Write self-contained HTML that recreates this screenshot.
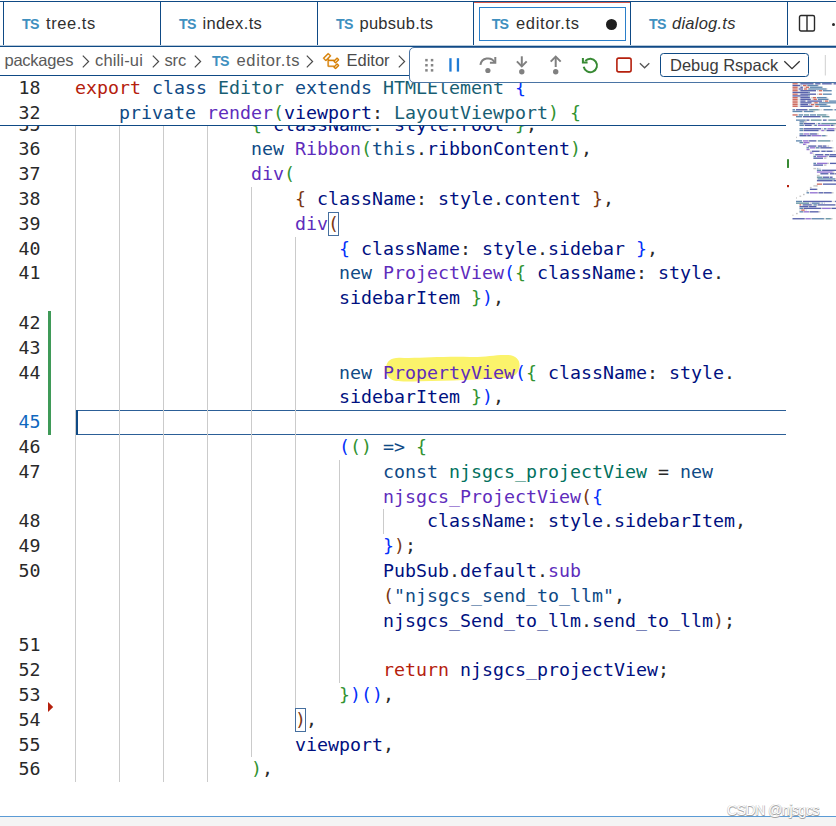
<!DOCTYPE html>
<html lang="en">
<head>
<meta charset="utf-8">
<title>editor.ts - Visual Studio Code</title>
<style>
html,body{margin:0;padding:0;background:#fff;}
body{width:836px;height:826px;position:relative;overflow:hidden;font-family:"Liberation Sans",sans-serif;color:#292929;}
.abs{position:absolute;}
/* ---------- tabs ---------- */
#tabs{position:absolute;left:0;top:0;width:836px;height:48px;background:#fff;}
#tabs .topline{position:absolute;left:0;top:1px;width:836px;height:1px;background:#0F4A85;}
#tabs .botline{position:absolute;left:0;top:45px;width:836px;height:3px;background:linear-gradient(#b7c9da 0,#b7c9da 1px,#0F4A85 1px,#0F4A85 2px,#c3d2e1 2px,#c3d2e1 3px);}
.vsep{position:absolute;top:1px;width:1px;height:45px;background:#0F4A85;}
.tab{position:absolute;top:2px;height:43px;}
.tsi{position:absolute;top:17.5px;font-size:14.2px;font-weight:bold;color:#3f90bf;letter-spacing:-0.75px;line-height:13px;}
.chev{position:absolute;}
.tlabel{position:absolute;top:12.5px;font-size:16.5px;line-height:20px;color:#303030;white-space:nowrap;}
/* ---------- breadcrumbs ---------- */
#crumbs{position:absolute;left:0;top:47px;width:836px;height:28px;background:#fff;}
#crumbs .botline{position:absolute;left:0;top:28px;width:836px;height:1px;background:#0F4A85;}
.bc{position:absolute;top:3px;font-size:16.5px;line-height:20px;color:#5a5a5a;white-space:nowrap;}
/* ---------- debug toolbar ---------- */
#dbg{position:absolute;left:409px;top:47px;width:440px;height:36px;background:#fff;border:1px solid #4a74a4;border-radius:5px 0 0 5px;box-sizing:border-box;}
#dbgsel{position:absolute;left:250px;top:5px;width:149px;height:24px;box-sizing:border-box;border:1px solid #0F4A85;border-radius:3.5px;background:#fff;}
#dbgsel span{position:absolute;left:9px;top:1px;font-size:16.5px;line-height:20px;color:#3b3b3b;white-space:nowrap;}
/* ---------- editor ---------- */
#editor{position:absolute;left:0;top:76px;width:836px;height:741px;background:#fff;overflow:hidden;}
#lines{position:absolute;left:0;top:-76px;width:836px;height:826px;}
.ln,.cl,.sl{font-family:"DejaVu Sans Mono","Liberation Mono",monospace;font-size:18.27px;line-height:24.8px;height:24.8px;white-space:pre;}
.ln{position:absolute;left:0;width:40.6px;text-align:right;color:#292929;}
.ln.cur{color:#1068bf;}
.cl{position:absolute;color:#292929;}
.ig{position:absolute;width:1px;background:#cbcbcb;}
.k{color:#B5200D}.s{color:#0F4A85}.t{color:#185E73}.t2{color:#02715D}.f,.fh{color:#5E2CBC}.v{color:#001080}.p{color:#292929}
.b1{color:#0431FA}.b2{color:#319331}.b3,.b3m{color:#7B3814}
.b3m{display:inline-block;height:24.8px;box-sizing:border-box;box-shadow:inset 0 0 0 1px #456f9f;vertical-align:top;}
.iga{background:#cbcbcb;}
.fh{position:relative;}
/* sticky */
#sticky{position:absolute;left:0;top:76px;width:786px;height:49px;background:#fff;border-bottom:1px solid #0F4A85;}
/* minimap */
#minimap{position:absolute;left:787px;top:76px;width:49px;height:741px;background:#fff;}
/* bottom */
#bottom{position:absolute;left:0;top:816px;width:836px;height:10px;background:#f4f4f4;border-top:1px solid #5b9bd5;box-sizing:border-box;}
#wm{position:absolute;left:727px;top:801.5px;font-size:14px;line-height:16px;color:#fff;text-shadow:0.5px 0.5px 0.3px #a2a2a2,-0.5px -0.5px 0.3px #cdcdcd,0.5px -0.5px 0.3px #c6c6c6,-0.5px 0.5px 0.3px #c6c6c6;white-space:nowrap;letter-spacing:-0.45px;z-index:5;}
</style>
</head>
<body>

<div id="editor">
<div id="lines">
<svg class="abs" style="left:380px;top:350px" width="146" height="36" viewBox="380 350 146 36"><path fill="#fbf36b" d="M386 369 C386 361 391 357.5 400 357.8 C420 358.6 440 356.2 470 357 C485 357.4 495 354.6 507 355 C516 355.2 520 360 519.6 366 C519 373 514 377.6 506 378 C480 379.2 450 381.2 420 381.2 C410 381.6 400 381.6 396 381 C390 380 386 376 386 369 Z"/></svg>
<div class="abs" style="left:48px;top:310.9px;width:3px;height:124.0px;background:#3f9a58"></div>
<div class="abs" style="left:75px;top:410.1px;width:711px;height:24.8px;box-sizing:border-box;border-top:1px solid #2c5f97;border-bottom:1px solid #2c5f97"></div>
<div class="abs" style="left:75px;top:410.1px;width:2.5px;height:24.8px;background:#0F4A85"></div>
<svg class="abs" style="left:46px;top:700px" width="10" height="14" viewBox="46 700 10 14"><polygon points="48,702 53.2,707 48,712" fill="#B5200D"/></svg>
<div class="ig " style="left:75.0px;top:112.5px;height:669.6px"></div>
<div class="ig " style="left:119.0px;top:112.5px;height:669.6px"></div>
<div class="ig " style="left:163.0px;top:112.5px;height:669.6px"></div>
<div class="ig " style="left:207.0px;top:112.5px;height:669.6px"></div>
<div class="ig " style="left:251.0px;top:186.9px;height:570.4px"></div>
<div class="ig iga" style="left:295.0px;top:236.5px;height:471.2px"></div>
<div class="ig " style="left:339.0px;top:459.7px;height:223.2px"></div>
<div class="ig " style="left:383.0px;top:509.3px;height:24.8px"></div>
<div class="ln" style="top:112.5px">35</div>
<div class="cl" style="top:112.5px;left:251.0px"><span class="b2">{</span><span class="p"> </span><span class="v">className</span><span class="p">: </span><span class="v">style</span><span class="p">.</span><span class="v">root</span><span class="p"> </span><span class="b2">}</span><span class="p">,</span></div>
<div class="ln" style="top:137.3px">36</div>
<div class="cl" style="top:137.3px;left:251.0px"><span class="s">new</span><span class="p"> </span><span class="f">Ribbon</span><span class="b2">(</span><span class="s">this</span><span class="p">.</span><span class="v">ribbonContent</span><span class="b2">)</span><span class="p">,</span></div>
<div class="ln" style="top:162.1px">37</div>
<div class="cl" style="top:162.1px;left:251.0px"><span class="f">div</span><span class="b2">(</span></div>
<div class="ln" style="top:186.9px">38</div>
<div class="cl" style="top:186.9px;left:295.0px"><span class="b3">{</span><span class="p"> </span><span class="v">className</span><span class="p">: </span><span class="v">style</span><span class="p">.</span><span class="v">content</span><span class="p"> </span><span class="b3">}</span><span class="p">,</span></div>
<div class="ln" style="top:211.7px">39</div>
<div class="cl" style="top:211.7px;left:295.0px"><span class="f">div</span><span class="b3m">(</span></div>
<div class="ln" style="top:236.5px">40</div>
<div class="cl" style="top:236.5px;left:339.0px"><span class="b1">{</span><span class="p"> </span><span class="v">className</span><span class="p">: </span><span class="v">style</span><span class="p">.</span><span class="v">sidebar</span><span class="p"> </span><span class="b1">}</span><span class="p">,</span></div>
<div class="ln" style="top:261.3px">41</div>
<div class="cl" style="top:261.3px;left:339.0px"><span class="s">new</span><span class="p"> </span><span class="f">ProjectView</span><span class="b1">(</span><span class="b2">{</span><span class="p"> </span><span class="v">className</span><span class="p">: </span><span class="v">style</span><span class="p">.</span></div>
<div class="cl" style="top:286.1px;left:339.0px"><span class="v">sidebarItem</span><span class="p"> </span><span class="b2">}</span><span class="b1">)</span><span class="p">,</span></div>
<div class="ln" style="top:310.9px">42</div>
<div class="ln" style="top:335.7px">43</div>
<div class="ln" style="top:360.5px">44</div>
<div class="cl" style="top:360.5px;left:339.0px"><span class="s">new</span><span class="p"> </span><span class="fh">PropertyView</span><span class="b1">(</span><span class="b2">{</span><span class="p"> </span><span class="v">className</span><span class="p">: </span><span class="v">style</span><span class="p">.</span></div>
<div class="cl" style="top:385.3px;left:339.0px"><span class="v">sidebarItem</span><span class="p"> </span><span class="b2">}</span><span class="b1">)</span><span class="p">,</span></div>
<div class="ln cur" style="top:410.1px">45</div>
<div class="ln" style="top:434.9px">46</div>
<div class="cl" style="top:434.9px;left:339.0px"><span class="b1">(</span><span class="b2">()</span><span class="p"> </span><span class="s">=&gt;</span><span class="p"> </span><span class="b2">{</span></div>
<div class="ln" style="top:459.7px">47</div>
<div class="cl" style="top:459.7px;left:383.0px"><span class="s">const</span><span class="p"> </span><span class="t2">njsgcs_projectView</span><span class="p"> = </span><span class="s">new</span></div>
<div class="cl" style="top:484.5px;left:383.0px"><span class="f">njsgcs_ProjectView</span><span class="b3">(</span><span class="b1">{</span></div>
<div class="ln" style="top:509.3px">48</div>
<div class="cl" style="top:509.3px;left:427.0px"><span class="v">className</span><span class="p">: </span><span class="v">style</span><span class="p">.</span><span class="v">sidebarItem</span><span class="p">,</span></div>
<div class="ln" style="top:534.1px">49</div>
<div class="cl" style="top:534.1px;left:383.0px"><span class="b1">}</span><span class="b3">)</span><span class="p">;</span></div>
<div class="ln" style="top:558.9px">50</div>
<div class="cl" style="top:558.9px;left:383.0px"><span class="v">PubSub</span><span class="p">.</span><span class="v">default</span><span class="p">.</span><span class="f">sub</span></div>
<div class="cl" style="top:583.7px;left:383.0px"><span class="b3">(</span><span class="s">&quot;njsgcs_send_to_llm&quot;</span><span class="p">,</span></div>
<div class="cl" style="top:608.5px;left:383.0px"><span class="v">njsgcs_Send_to_llm</span><span class="p">.</span><span class="v">send_to_llm</span><span class="b3">)</span><span class="p">;</span></div>
<div class="ln" style="top:633.3px">51</div>
<div class="ln" style="top:658.1px">52</div>
<div class="cl" style="top:658.1px;left:383.0px"><span class="k">return</span><span class="p"> </span><span class="v">njsgcs_projectView</span><span class="p">;</span></div>
<div class="ln" style="top:682.9px">53</div>
<div class="cl" style="top:682.9px;left:339.0px"><span class="b2">}</span><span class="b1">)</span><span class="b1">()</span><span class="p">,</span></div>
<div class="ln" style="top:707.7px">54</div>
<div class="cl" style="top:707.7px;left:295.0px"><span class="b3m">)</span><span class="p">,</span></div>
<div class="ln" style="top:732.5px">55</div>
<div class="cl" style="top:732.5px;left:295.0px"><span class="v">viewport</span><span class="p">,</span></div>
<div class="ln" style="top:757.3px">56</div>
<div class="cl" style="top:757.3px;left:251.0px"><span class="b2">)</span><span class="p">,</span></div>
</div>
</div>

<div id="sticky">
<div class="ln" style="top:0.2px">18</div>
<div class="cl" style="top:0.2px;left:75px"><span class="k">export</span> <span class="s">class</span> <span class="t">Editor</span> <span class="s">extends</span> <span class="t">HTMLElement</span> <span class="b1">{</span></div>
<div class="ln" style="top:25px">32</div>
<div class="cl" style="top:25px;left:119px"><span class="s">private</span> <span class="f">render</span><span class="b2">(</span><span class="v">viewport</span><span class="p">:</span> <span class="t">LayoutViewport</span><span class="b2">)</span> <span class="b2">{</span></div>
</div>
<div id="minimap"></div>
<svg id="mm" style="position:absolute;left:786px;top:76px" width="50" height="160" viewBox="786 76 50 160">
<rect x="792.5" y="83.13" width="5.2" height="1.35" fill="#B5200D" opacity="0.66"/>
<rect x="798.6" y="83.13" width="0.9" height="1.35" fill="#555" opacity="0.35"/>
<rect x="800.3" y="83.13" width="13.1" height="1.35" fill="#001080" opacity="0.66"/>
<rect x="813.4" y="83.13" width="0.9" height="1.35" fill="#666" opacity="0.35"/>
<rect x="815.2" y="83.13" width="5.2" height="1.35" fill="#001080" opacity="0.66"/>
<rect x="820.4" y="83.13" width="0.9" height="1.35" fill="#666" opacity="0.35"/>
<rect x="822.1" y="83.13" width="9.6" height="1.35" fill="#001080" opacity="0.66"/>
<rect x="831.7" y="83.13" width="0.9" height="1.35" fill="#666" opacity="0.35"/>
<rect x="833.5" y="83.13" width="2.5" height="1.35" fill="#001080" opacity="0.66"/>
<rect x="792.5" y="84.86" width="7.8" height="1.35" fill="#001080" opacity="0.66"/>
<rect x="801.2" y="84.86" width="0.9" height="1.35" fill="#555" opacity="0.35"/>
<rect x="803.0" y="84.86" width="3.5" height="1.35" fill="#B5200D" opacity="0.66"/>
<rect x="807.3" y="84.86" width="10.5" height="1.35" fill="#0F4A85" opacity="0.66"/>
<rect x="817.8" y="84.86" width="0.9" height="1.35" fill="#666" opacity="0.35"/>
<rect x="792.5" y="86.59" width="5.2" height="1.35" fill="#B5200D" opacity="0.66"/>
<rect x="798.6" y="86.59" width="0.9" height="1.35" fill="#555" opacity="0.35"/>
<rect x="800.3" y="86.59" width="2.6" height="1.35" fill="#001080" opacity="0.66"/>
<rect x="803.8" y="86.59" width="0.9" height="1.35" fill="#555" opacity="0.35"/>
<rect x="805.6" y="86.59" width="3.5" height="1.35" fill="#B5200D" opacity="0.66"/>
<rect x="809.9" y="86.59" width="12.2" height="1.35" fill="#0F4A85" opacity="0.66"/>
<rect x="822.1" y="86.59" width="0.9" height="1.35" fill="#666" opacity="0.35"/>
<rect x="792.5" y="88.32" width="5.2" height="1.35" fill="#B5200D" opacity="0.66"/>
<rect x="798.6" y="88.32" width="4.4" height="1.35" fill="#001080" opacity="0.66"/>
<rect x="803.8" y="88.32" width="3.5" height="1.35" fill="#B5200D" opacity="0.66"/>
<rect x="808.2" y="88.32" width="18.3" height="1.35" fill="#0F4A85" opacity="0.66"/>
<rect x="826.5" y="88.32" width="0.9" height="1.35" fill="#666" opacity="0.35"/>
<rect x="792.5" y="90.05" width="5.2" height="1.35" fill="#B5200D" opacity="0.66"/>
<rect x="798.6" y="90.05" width="0.9" height="1.35" fill="#555" opacity="0.35"/>
<rect x="800.3" y="90.05" width="15.7" height="1.35" fill="#001080" opacity="0.66"/>
<rect x="816.9" y="90.05" width="0.9" height="1.35" fill="#555" opacity="0.35"/>
<rect x="818.7" y="90.05" width="3.5" height="1.35" fill="#B5200D" opacity="0.66"/>
<rect x="823.0" y="90.05" width="8.7" height="1.35" fill="#0F4A85" opacity="0.66"/>
<rect x="792.5" y="91.78" width="15.7" height="1.35" fill="#001080" opacity="0.66"/>
<rect x="808.2" y="91.78" width="1.7" height="1.35" fill="#0F4A85" opacity="0.66"/>
<rect x="792.5" y="93.51" width="5.2" height="1.35" fill="#B5200D" opacity="0.66"/>
<rect x="798.6" y="93.51" width="0.9" height="1.35" fill="#555" opacity="0.35"/>
<rect x="800.3" y="93.51" width="15.7" height="1.35" fill="#001080" opacity="0.66"/>
<rect x="816.9" y="93.51" width="0.9" height="1.35" fill="#555" opacity="0.35"/>
<rect x="818.7" y="93.51" width="3.5" height="1.35" fill="#B5200D" opacity="0.66"/>
<rect x="823.0" y="93.51" width="8.7" height="1.35" fill="#0F4A85" opacity="0.66"/>
<rect x="792.5" y="95.24" width="15.7" height="1.35" fill="#001080" opacity="0.66"/>
<rect x="808.2" y="95.24" width="1.7" height="1.35" fill="#0F4A85" opacity="0.66"/>
<rect x="792.5" y="96.97" width="5.2" height="1.35" fill="#B5200D" opacity="0.66"/>
<rect x="798.6" y="96.97" width="0.9" height="1.35" fill="#555" opacity="0.35"/>
<rect x="800.3" y="96.97" width="9.6" height="1.35" fill="#001080" opacity="0.66"/>
<rect x="810.8" y="96.97" width="0.9" height="1.35" fill="#555" opacity="0.35"/>
<rect x="812.6" y="96.97" width="3.5" height="1.35" fill="#B5200D" opacity="0.66"/>
<rect x="816.9" y="96.97" width="9.6" height="1.35" fill="#0F4A85" opacity="0.66"/>
<rect x="826.5" y="96.97" width="0.9" height="1.35" fill="#666" opacity="0.35"/>
<rect x="792.5" y="98.70" width="5.2" height="1.35" fill="#B5200D" opacity="0.66"/>
<rect x="798.6" y="98.70" width="0.9" height="1.35" fill="#555" opacity="0.35"/>
<rect x="800.3" y="98.70" width="10.5" height="1.35" fill="#001080" opacity="0.66"/>
<rect x="811.7" y="98.70" width="0.9" height="1.35" fill="#555" opacity="0.35"/>
<rect x="813.4" y="98.70" width="3.5" height="1.35" fill="#B5200D" opacity="0.66"/>
<rect x="817.8" y="98.70" width="10.5" height="1.35" fill="#0F4A85" opacity="0.66"/>
<rect x="828.3" y="98.70" width="0.9" height="1.35" fill="#666" opacity="0.35"/>
<rect x="792.5" y="100.43" width="5.2" height="1.35" fill="#B5200D" opacity="0.66"/>
<rect x="798.6" y="100.43" width="0.9" height="1.35" fill="#555" opacity="0.35"/>
<rect x="800.3" y="100.43" width="5.2" height="1.35" fill="#001080" opacity="0.66"/>
<rect x="805.6" y="100.43" width="0.9" height="1.35" fill="#666" opacity="0.35"/>
<rect x="807.3" y="100.43" width="14.8" height="1.35" fill="#001080" opacity="0.66"/>
<rect x="823.0" y="100.43" width="0.9" height="1.35" fill="#555" opacity="0.35"/>
<rect x="824.8" y="100.43" width="3.5" height="1.35" fill="#B5200D" opacity="0.66"/>
<rect x="829.1" y="100.43" width="6.9" height="1.35" fill="#0F4A85" opacity="0.66"/>
<rect x="792.5" y="102.16" width="5.2" height="1.35" fill="#B5200D" opacity="0.66"/>
<rect x="798.6" y="102.16" width="0.9" height="1.35" fill="#555" opacity="0.35"/>
<rect x="800.3" y="102.16" width="11.3" height="1.35" fill="#001080" opacity="0.66"/>
<rect x="812.6" y="102.16" width="0.9" height="1.35" fill="#555" opacity="0.35"/>
<rect x="814.3" y="102.16" width="3.5" height="1.35" fill="#B5200D" opacity="0.66"/>
<rect x="818.7" y="102.16" width="17.3" height="1.35" fill="#0F4A85" opacity="0.66"/>
<rect x="792.5" y="103.89" width="5.2" height="1.35" fill="#B5200D" opacity="0.66"/>
<rect x="798.6" y="103.89" width="0.9" height="1.35" fill="#555" opacity="0.35"/>
<rect x="800.3" y="103.89" width="7.8" height="1.35" fill="#001080" opacity="0.66"/>
<rect x="809.1" y="103.89" width="0.9" height="1.35" fill="#555" opacity="0.35"/>
<rect x="810.8" y="103.89" width="3.5" height="1.35" fill="#B5200D" opacity="0.66"/>
<rect x="815.2" y="103.89" width="11.3" height="1.35" fill="#0F4A85" opacity="0.66"/>
<rect x="826.5" y="103.89" width="0.9" height="1.35" fill="#666" opacity="0.35"/>
<rect x="792.5" y="105.62" width="5.2" height="1.35" fill="#B5200D" opacity="0.66"/>
<rect x="798.6" y="105.62" width="0.9" height="1.35" fill="#555" opacity="0.35"/>
<rect x="800.3" y="105.62" width="12.2" height="1.35" fill="#001080" opacity="0.66"/>
<rect x="813.4" y="105.62" width="0.9" height="1.35" fill="#555" opacity="0.35"/>
<rect x="815.2" y="105.62" width="3.5" height="1.35" fill="#B5200D" opacity="0.66"/>
<rect x="819.5" y="105.62" width="10.5" height="1.35" fill="#0F4A85" opacity="0.66"/>
<rect x="830.0" y="105.62" width="0.9" height="1.35" fill="#666" opacity="0.35"/>
<rect x="792.5" y="109.08" width="2.6" height="1.35" fill="#0F4A85" opacity="0.66"/>
<rect x="796.0" y="109.08" width="11.3" height="1.35" fill="#001080" opacity="0.66"/>
<rect x="807.3" y="109.08" width="0.9" height="1.35" fill="#666" opacity="0.35"/>
<rect x="809.1" y="109.08" width="9.6" height="1.35" fill="#185E73" opacity="0.66"/>
<rect x="818.7" y="109.08" width="0.9" height="1.35" fill="#555" opacity="0.35"/>
<rect x="819.5" y="109.08" width="0.9" height="1.35" fill="#555" opacity="0.35"/>
<rect x="821.3" y="109.08" width="0.9" height="1.35" fill="#666" opacity="0.35"/>
<rect x="823.0" y="109.08" width="0.9" height="1.35" fill="#555" opacity="0.35"/>
<rect x="823.9" y="109.08" width="8.7" height="1.35" fill="#0F4A85" opacity="0.66"/>
<rect x="832.6" y="109.08" width="0.9" height="1.35" fill="#666" opacity="0.35"/>
<rect x="834.4" y="109.08" width="1.6" height="1.35" fill="#0F4A85" opacity="0.66"/>
<rect x="792.5" y="110.81" width="9.6" height="1.35" fill="#0F4A85" opacity="0.66"/>
<rect x="802.1" y="110.81" width="0.9" height="1.35" fill="#666" opacity="0.35"/>
<rect x="803.8" y="110.81" width="9.6" height="1.35" fill="#0F4A85" opacity="0.66"/>
<rect x="813.4" y="110.81" width="0.9" height="1.35" fill="#555" opacity="0.35"/>
<rect x="814.3" y="110.81" width="0.9" height="1.35" fill="#666" opacity="0.35"/>
<rect x="792.5" y="114.27" width="5.2" height="1.35" fill="#B5200D" opacity="0.66"/>
<rect x="798.6" y="114.27" width="4.4" height="1.35" fill="#0F4A85" opacity="0.66"/>
<rect x="803.8" y="114.27" width="5.2" height="1.35" fill="#185E73" opacity="0.66"/>
<rect x="809.9" y="114.27" width="6.1" height="1.35" fill="#0F4A85" opacity="0.66"/>
<rect x="816.9" y="114.27" width="9.6" height="1.35" fill="#185E73" opacity="0.66"/>
<rect x="827.4" y="114.27" width="0.9" height="1.35" fill="#555" opacity="0.35"/>
<rect x="796.0" y="116.00" width="6.1" height="1.35" fill="#0F4A85" opacity="0.66"/>
<rect x="803.0" y="116.00" width="17.4" height="1.35" fill="#001080" opacity="0.66"/>
<rect x="820.4" y="116.00" width="0.9" height="1.35" fill="#666" opacity="0.35"/>
<rect x="822.1" y="116.00" width="7.0" height="1.35" fill="#185E73" opacity="0.66"/>
<rect x="829.1" y="116.00" width="0.9" height="1.35" fill="#666" opacity="0.35"/>
<rect x="796.0" y="119.46" width="9.6" height="1.35" fill="#0F4A85" opacity="0.66"/>
<rect x="805.6" y="119.46" width="0.9" height="1.35" fill="#555" opacity="0.35"/>
<rect x="806.5" y="119.46" width="2.6" height="1.35" fill="#001080" opacity="0.66"/>
<rect x="809.1" y="119.46" width="0.9" height="1.35" fill="#666" opacity="0.35"/>
<rect x="810.8" y="119.46" width="10.5" height="1.35" fill="#185E73" opacity="0.66"/>
<rect x="821.3" y="119.46" width="0.9" height="1.35" fill="#666" opacity="0.35"/>
<rect x="823.0" y="119.46" width="3.5" height="1.35" fill="#001080" opacity="0.66"/>
<rect x="826.5" y="119.46" width="0.9" height="1.35" fill="#666" opacity="0.35"/>
<rect x="828.3" y="119.46" width="7.7" height="1.35" fill="#185E73" opacity="0.66"/>
<rect x="799.5" y="121.19" width="4.4" height="1.35" fill="#0F4A85" opacity="0.66"/>
<rect x="803.8" y="121.19" width="0.9" height="1.35" fill="#555" opacity="0.35"/>
<rect x="804.7" y="121.19" width="0.9" height="1.35" fill="#555" opacity="0.35"/>
<rect x="805.6" y="121.19" width="0.9" height="1.35" fill="#666" opacity="0.35"/>
<rect x="799.5" y="122.92" width="3.5" height="1.35" fill="#0F4A85" opacity="0.66"/>
<rect x="803.0" y="122.92" width="0.9" height="1.35" fill="#666" opacity="0.35"/>
<rect x="803.8" y="122.92" width="11.3" height="1.35" fill="#001080" opacity="0.66"/>
<rect x="816.0" y="122.92" width="0.9" height="1.35" fill="#666" opacity="0.35"/>
<rect x="817.8" y="122.92" width="2.6" height="1.35" fill="#0F4A85" opacity="0.66"/>
<rect x="821.3" y="122.92" width="14.7" height="1.35" fill="#185E73" opacity="0.66"/>
<rect x="799.5" y="124.65" width="4.4" height="1.35" fill="#0F4A85" opacity="0.66"/>
<rect x="804.7" y="124.65" width="7.0" height="1.35" fill="#001080" opacity="0.66"/>
<rect x="812.6" y="124.65" width="0.9" height="1.35" fill="#666" opacity="0.35"/>
<rect x="814.3" y="124.65" width="2.6" height="1.35" fill="#0F4A85" opacity="0.66"/>
<rect x="817.8" y="124.65" width="12.2" height="1.35" fill="#5E2CBC" opacity="0.66"/>
<rect x="830.0" y="124.65" width="0.9" height="1.35" fill="#555" opacity="0.35"/>
<rect x="830.9" y="124.65" width="2.6" height="1.35" fill="#001080" opacity="0.66"/>
<rect x="833.5" y="124.65" width="0.9" height="1.35" fill="#555" opacity="0.35"/>
<rect x="834.4" y="124.65" width="0.9" height="1.35" fill="#666" opacity="0.35"/>
<rect x="799.5" y="128.11" width="3.5" height="1.35" fill="#0F4A85" opacity="0.66"/>
<rect x="803.0" y="128.11" width="0.9" height="1.35" fill="#666" opacity="0.35"/>
<rect x="803.8" y="128.11" width="17.4" height="1.35" fill="#001080" opacity="0.66"/>
<rect x="822.1" y="128.11" width="0.9" height="1.35" fill="#666" opacity="0.35"/>
<rect x="823.9" y="128.11" width="2.6" height="1.35" fill="#0F4A85" opacity="0.66"/>
<rect x="827.4" y="128.11" width="7.0" height="1.35" fill="#5E2CBC" opacity="0.66"/>
<rect x="834.4" y="128.11" width="0.9" height="1.35" fill="#555" opacity="0.35"/>
<rect x="835.2" y="128.11" width="0.8" height="1.35" fill="#555" opacity="0.35"/>
<rect x="799.5" y="129.84" width="3.5" height="1.35" fill="#0F4A85" opacity="0.66"/>
<rect x="803.0" y="129.84" width="0.9" height="1.35" fill="#666" opacity="0.35"/>
<rect x="803.8" y="129.84" width="14.8" height="1.35" fill="#001080" opacity="0.66"/>
<rect x="819.5" y="129.84" width="0.9" height="1.35" fill="#666" opacity="0.35"/>
<rect x="821.3" y="129.84" width="2.6" height="1.35" fill="#5E2CBC" opacity="0.66"/>
<rect x="823.9" y="129.84" width="0.9" height="1.35" fill="#555" opacity="0.35"/>
<rect x="824.8" y="129.84" width="0.9" height="1.35" fill="#555" opacity="0.35"/>
<rect x="826.5" y="129.84" width="7.8" height="1.35" fill="#001080" opacity="0.66"/>
<rect x="834.4" y="129.84" width="0.9" height="1.35" fill="#666" opacity="0.35"/>
<rect x="799.5" y="133.30" width="3.5" height="1.35" fill="#0F4A85" opacity="0.66"/>
<rect x="803.0" y="133.30" width="0.9" height="1.35" fill="#666" opacity="0.35"/>
<rect x="803.8" y="133.30" width="5.2" height="1.35" fill="#5E2CBC" opacity="0.66"/>
<rect x="809.1" y="133.30" width="0.9" height="1.35" fill="#555" opacity="0.35"/>
<rect x="809.9" y="133.30" width="7.0" height="1.35" fill="#001080" opacity="0.66"/>
<rect x="816.9" y="133.30" width="0.9" height="1.35" fill="#555" opacity="0.35"/>
<rect x="817.8" y="133.30" width="0.9" height="1.35" fill="#666" opacity="0.35"/>
<rect x="799.5" y="135.03" width="7.0" height="1.35" fill="#001080" opacity="0.66"/>
<rect x="806.5" y="135.03" width="0.9" height="1.35" fill="#666" opacity="0.35"/>
<rect x="807.3" y="135.03" width="3.5" height="1.35" fill="#001080" opacity="0.66"/>
<rect x="810.8" y="135.03" width="0.9" height="1.35" fill="#666" opacity="0.35"/>
<rect x="811.7" y="135.03" width="9.6" height="1.35" fill="#5E2CBC" opacity="0.66"/>
<rect x="821.3" y="135.03" width="0.9" height="1.35" fill="#555" opacity="0.35"/>
<rect x="822.1" y="135.03" width="3.5" height="1.35" fill="#0F4A85" opacity="0.66"/>
<rect x="825.6" y="135.03" width="0.9" height="1.35" fill="#555" opacity="0.35"/>
<rect x="826.5" y="135.03" width="0.9" height="1.35" fill="#666" opacity="0.35"/>
<rect x="796.0" y="136.76" width="0.9" height="1.35" fill="#555" opacity="0.35"/>
<rect x="796.0" y="140.22" width="6.1" height="1.35" fill="#0F4A85" opacity="0.66"/>
<rect x="803.0" y="140.22" width="5.2" height="1.35" fill="#5E2CBC" opacity="0.66"/>
<rect x="808.2" y="140.22" width="0.9" height="1.35" fill="#555" opacity="0.35"/>
<rect x="809.1" y="140.22" width="7.0" height="1.35" fill="#001080" opacity="0.66"/>
<rect x="816.0" y="140.22" width="0.9" height="1.35" fill="#666" opacity="0.35"/>
<rect x="817.8" y="140.22" width="12.2" height="1.35" fill="#185E73" opacity="0.66"/>
<rect x="830.0" y="140.22" width="0.9" height="1.35" fill="#555" opacity="0.35"/>
<rect x="831.7" y="140.22" width="0.9" height="1.35" fill="#555" opacity="0.35"/>
<rect x="799.5" y="141.95" width="3.5" height="1.35" fill="#0F4A85" opacity="0.66"/>
<rect x="803.0" y="141.95" width="0.9" height="1.35" fill="#666" opacity="0.35"/>
<rect x="803.8" y="141.95" width="5.2" height="1.35" fill="#5E2CBC" opacity="0.66"/>
<rect x="809.1" y="141.95" width="0.9" height="1.35" fill="#555" opacity="0.35"/>
<rect x="803.0" y="143.68" width="2.6" height="1.35" fill="#5E2CBC" opacity="0.66"/>
<rect x="805.6" y="143.68" width="0.9" height="1.35" fill="#555" opacity="0.35"/>
<rect x="806.5" y="145.41" width="0.9" height="1.35" fill="#555" opacity="0.35"/>
<rect x="808.2" y="145.41" width="7.8" height="1.35" fill="#001080" opacity="0.66"/>
<rect x="816.0" y="145.41" width="0.9" height="1.35" fill="#666" opacity="0.35"/>
<rect x="817.8" y="145.41" width="4.4" height="1.35" fill="#001080" opacity="0.66"/>
<rect x="822.1" y="145.41" width="0.9" height="1.35" fill="#666" opacity="0.35"/>
<rect x="823.0" y="145.41" width="3.5" height="1.35" fill="#001080" opacity="0.66"/>
<rect x="827.4" y="145.41" width="0.9" height="1.35" fill="#555" opacity="0.35"/>
<rect x="828.3" y="145.41" width="0.9" height="1.35" fill="#666" opacity="0.35"/>
<rect x="806.5" y="147.14" width="2.6" height="1.35" fill="#0F4A85" opacity="0.66"/>
<rect x="809.9" y="147.14" width="5.2" height="1.35" fill="#5E2CBC" opacity="0.66"/>
<rect x="815.2" y="147.14" width="0.9" height="1.35" fill="#555" opacity="0.35"/>
<rect x="816.0" y="147.14" width="3.5" height="1.35" fill="#0F4A85" opacity="0.66"/>
<rect x="819.5" y="147.14" width="0.9" height="1.35" fill="#666" opacity="0.35"/>
<rect x="820.4" y="147.14" width="11.3" height="1.35" fill="#001080" opacity="0.66"/>
<rect x="831.7" y="147.14" width="0.9" height="1.35" fill="#555" opacity="0.35"/>
<rect x="832.6" y="147.14" width="0.9" height="1.35" fill="#666" opacity="0.35"/>
<rect x="806.5" y="148.87" width="2.6" height="1.35" fill="#5E2CBC" opacity="0.66"/>
<rect x="809.1" y="148.87" width="0.9" height="1.35" fill="#555" opacity="0.35"/>
<rect x="809.9" y="150.60" width="0.9" height="1.35" fill="#555" opacity="0.35"/>
<rect x="811.7" y="150.60" width="7.8" height="1.35" fill="#001080" opacity="0.66"/>
<rect x="819.5" y="150.60" width="0.9" height="1.35" fill="#666" opacity="0.35"/>
<rect x="821.3" y="150.60" width="4.4" height="1.35" fill="#001080" opacity="0.66"/>
<rect x="825.6" y="150.60" width="0.9" height="1.35" fill="#666" opacity="0.35"/>
<rect x="826.5" y="150.60" width="6.1" height="1.35" fill="#001080" opacity="0.66"/>
<rect x="833.5" y="150.60" width="0.9" height="1.35" fill="#555" opacity="0.35"/>
<rect x="834.4" y="150.60" width="0.9" height="1.35" fill="#666" opacity="0.35"/>
<rect x="809.9" y="152.33" width="2.6" height="1.35" fill="#5E2CBC" opacity="0.66"/>
<rect x="812.6" y="152.33" width="0.9" height="1.35" fill="#555" opacity="0.35"/>
<rect x="813.4" y="154.06" width="0.9" height="1.35" fill="#555" opacity="0.35"/>
<rect x="815.2" y="154.06" width="7.8" height="1.35" fill="#001080" opacity="0.66"/>
<rect x="823.0" y="154.06" width="0.9" height="1.35" fill="#666" opacity="0.35"/>
<rect x="824.8" y="154.06" width="4.4" height="1.35" fill="#001080" opacity="0.66"/>
<rect x="829.1" y="154.06" width="0.9" height="1.35" fill="#666" opacity="0.35"/>
<rect x="830.0" y="154.06" width="6.0" height="1.35" fill="#001080" opacity="0.66"/>
<rect x="813.4" y="155.79" width="2.6" height="1.35" fill="#0F4A85" opacity="0.66"/>
<rect x="816.9" y="155.79" width="9.6" height="1.35" fill="#5E2CBC" opacity="0.66"/>
<rect x="826.5" y="155.79" width="0.9" height="1.35" fill="#555" opacity="0.35"/>
<rect x="827.4" y="155.79" width="0.9" height="1.35" fill="#555" opacity="0.35"/>
<rect x="829.1" y="155.79" width="6.9" height="1.35" fill="#001080" opacity="0.66"/>
<rect x="813.4" y="157.52" width="9.6" height="1.35" fill="#001080" opacity="0.66"/>
<rect x="823.9" y="157.52" width="0.9" height="1.35" fill="#555" opacity="0.35"/>
<rect x="824.8" y="157.52" width="0.9" height="1.35" fill="#555" opacity="0.35"/>
<rect x="825.6" y="157.52" width="0.9" height="1.35" fill="#666" opacity="0.35"/>
<rect x="813.4" y="162.71" width="2.6" height="1.35" fill="#0F4A85" opacity="0.66"/>
<rect x="816.9" y="162.71" width="10.5" height="1.35" fill="#5E2CBC" opacity="0.66"/>
<rect x="827.4" y="162.71" width="0.9" height="1.35" fill="#555" opacity="0.35"/>
<rect x="828.3" y="162.71" width="0.9" height="1.35" fill="#555" opacity="0.35"/>
<rect x="830.0" y="162.71" width="6.0" height="1.35" fill="#001080" opacity="0.66"/>
<rect x="813.4" y="164.44" width="9.6" height="1.35" fill="#001080" opacity="0.66"/>
<rect x="823.9" y="164.44" width="0.9" height="1.35" fill="#555" opacity="0.35"/>
<rect x="824.8" y="164.44" width="0.9" height="1.35" fill="#555" opacity="0.35"/>
<rect x="825.6" y="164.44" width="0.9" height="1.35" fill="#666" opacity="0.35"/>
<rect x="813.4" y="167.90" width="0.9" height="1.35" fill="#555" opacity="0.35"/>
<rect x="814.3" y="167.90" width="0.9" height="1.35" fill="#555" opacity="0.35"/>
<rect x="815.2" y="167.90" width="0.9" height="1.35" fill="#555" opacity="0.35"/>
<rect x="816.9" y="167.90" width="1.7" height="1.35" fill="#0F4A85" opacity="0.35"/>
<rect x="819.5" y="167.90" width="0.9" height="1.35" fill="#555" opacity="0.35"/>
<rect x="816.9" y="169.63" width="4.4" height="1.35" fill="#0F4A85" opacity="0.66"/>
<rect x="822.1" y="169.63" width="13.9" height="1.35" fill="#001080" opacity="0.66"/>
<rect x="816.9" y="171.36" width="15.7" height="1.35" fill="#5E2CBC" opacity="0.66"/>
<rect x="832.6" y="171.36" width="0.9" height="1.35" fill="#555" opacity="0.35"/>
<rect x="833.5" y="171.36" width="0.9" height="1.35" fill="#555" opacity="0.35"/>
<rect x="820.4" y="173.09" width="7.8" height="1.35" fill="#001080" opacity="0.66"/>
<rect x="828.3" y="173.09" width="0.9" height="1.35" fill="#666" opacity="0.35"/>
<rect x="830.0" y="173.09" width="4.4" height="1.35" fill="#001080" opacity="0.66"/>
<rect x="834.4" y="173.09" width="0.9" height="1.35" fill="#666" opacity="0.35"/>
<rect x="835.2" y="173.09" width="0.8" height="1.35" fill="#001080" opacity="0.66"/>
<rect x="816.9" y="174.82" width="0.9" height="1.35" fill="#555" opacity="0.35"/>
<rect x="817.8" y="174.82" width="0.9" height="1.35" fill="#555" opacity="0.35"/>
<rect x="818.7" y="174.82" width="0.9" height="1.35" fill="#666" opacity="0.35"/>
<rect x="816.9" y="176.55" width="5.2" height="1.35" fill="#185E73" opacity="0.66"/>
<rect x="822.1" y="176.55" width="0.9" height="1.35" fill="#666" opacity="0.35"/>
<rect x="823.0" y="176.55" width="6.1" height="1.35" fill="#001080" opacity="0.66"/>
<rect x="829.1" y="176.55" width="0.9" height="1.35" fill="#666" opacity="0.35"/>
<rect x="830.0" y="176.55" width="2.6" height="1.35" fill="#001080" opacity="0.66"/>
<rect x="816.9" y="178.28" width="0.9" height="1.35" fill="#555" opacity="0.35"/>
<rect x="817.8" y="178.28" width="17.4" height="1.35" fill="#0F4A85" opacity="0.66"/>
<rect x="835.2" y="178.28" width="0.8" height="1.35" fill="#666" opacity="0.35"/>
<rect x="816.9" y="180.01" width="15.7" height="1.35" fill="#001080" opacity="0.66"/>
<rect x="832.6" y="180.01" width="0.9" height="1.35" fill="#666" opacity="0.35"/>
<rect x="833.5" y="180.01" width="2.5" height="1.35" fill="#001080" opacity="0.66"/>
<rect x="816.9" y="183.47" width="5.2" height="1.35" fill="#B5200D" opacity="0.66"/>
<rect x="823.0" y="183.47" width="13.0" height="1.35" fill="#001080" opacity="0.66"/>
<rect x="813.4" y="185.20" width="0.9" height="1.35" fill="#555" opacity="0.35"/>
<rect x="814.3" y="185.20" width="0.9" height="1.35" fill="#555" opacity="0.35"/>
<rect x="815.2" y="185.20" width="0.9" height="1.35" fill="#555" opacity="0.35"/>
<rect x="816.0" y="185.20" width="0.9" height="1.35" fill="#555" opacity="0.35"/>
<rect x="816.9" y="185.20" width="0.9" height="1.35" fill="#666" opacity="0.35"/>
<rect x="809.9" y="186.93" width="0.9" height="1.35" fill="#555" opacity="0.35"/>
<rect x="810.8" y="186.93" width="0.9" height="1.35" fill="#666" opacity="0.35"/>
<rect x="809.9" y="188.66" width="7.0" height="1.35" fill="#001080" opacity="0.66"/>
<rect x="816.9" y="188.66" width="0.9" height="1.35" fill="#666" opacity="0.35"/>
<rect x="806.5" y="190.39" width="0.9" height="1.35" fill="#555" opacity="0.35"/>
<rect x="807.3" y="190.39" width="0.9" height="1.35" fill="#666" opacity="0.35"/>
<rect x="806.5" y="192.12" width="2.6" height="1.35" fill="#0F4A85" opacity="0.66"/>
<rect x="809.9" y="192.12" width="7.8" height="1.35" fill="#5E2CBC" opacity="0.66"/>
<rect x="817.8" y="192.12" width="0.9" height="1.35" fill="#555" opacity="0.35"/>
<rect x="818.7" y="192.12" width="4.4" height="1.35" fill="#001080" opacity="0.66"/>
<rect x="823.0" y="192.12" width="0.9" height="1.35" fill="#666" opacity="0.35"/>
<rect x="823.9" y="192.12" width="7.8" height="1.35" fill="#001080" opacity="0.66"/>
<rect x="831.7" y="192.12" width="0.9" height="1.35" fill="#555" opacity="0.35"/>
<rect x="832.6" y="192.12" width="0.9" height="1.35" fill="#666" opacity="0.35"/>
<rect x="803.0" y="193.85" width="0.9" height="1.35" fill="#555" opacity="0.35"/>
<rect x="803.8" y="193.85" width="0.9" height="1.35" fill="#666" opacity="0.35"/>
<rect x="799.5" y="195.58" width="0.9" height="1.35" fill="#555" opacity="0.35"/>
<rect x="800.3" y="195.58" width="0.9" height="1.35" fill="#666" opacity="0.35"/>
<rect x="796.0" y="197.31" width="0.9" height="1.35" fill="#555" opacity="0.35"/>
<rect x="796.0" y="200.77" width="6.1" height="1.35" fill="#0F4A85" opacity="0.66"/>
<rect x="803.0" y="200.77" width="28.8" height="1.35" fill="#001080" opacity="0.66"/>
<rect x="832.6" y="200.77" width="0.9" height="1.35" fill="#666" opacity="0.35"/>
<rect x="834.4" y="200.77" width="0.9" height="1.35" fill="#555" opacity="0.35"/>
<rect x="835.2" y="200.77" width="0.8" height="1.35" fill="#001080" opacity="0.66"/>
<rect x="796.0" y="202.50" width="13.1" height="1.35" fill="#185E73" opacity="0.66"/>
<rect x="809.9" y="202.50" width="0.9" height="1.35" fill="#666" opacity="0.35"/>
<rect x="811.7" y="202.50" width="7.8" height="1.35" fill="#0F4A85" opacity="0.66"/>
<rect x="819.5" y="202.50" width="0.9" height="1.35" fill="#555" opacity="0.35"/>
<rect x="821.3" y="202.50" width="1.7" height="1.35" fill="#0F4A85" opacity="0.35"/>
<rect x="823.9" y="202.50" width="0.9" height="1.35" fill="#555" opacity="0.35"/>
<rect x="799.5" y="204.23" width="1.7" height="1.35" fill="#B5200D" opacity="0.66"/>
<rect x="802.1" y="204.23" width="0.9" height="1.35" fill="#555" opacity="0.35"/>
<rect x="803.0" y="204.23" width="8.7" height="1.35" fill="#001080" opacity="0.66"/>
<rect x="811.7" y="204.23" width="0.9" height="1.35" fill="#555" opacity="0.35"/>
<rect x="813.4" y="204.23" width="3.5" height="1.35" fill="#0F4A85" opacity="0.66"/>
<rect x="816.9" y="204.23" width="0.9" height="1.35" fill="#666" opacity="0.35"/>
<rect x="817.8" y="204.23" width="17.4" height="1.35" fill="#001080" opacity="0.66"/>
<rect x="835.2" y="204.23" width="0.8" height="1.35" fill="#666" opacity="0.35"/>
<rect x="799.5" y="205.96" width="8.7" height="1.35" fill="#001080" opacity="0.66"/>
<rect x="808.2" y="205.96" width="0.9" height="1.35" fill="#666" opacity="0.35"/>
<rect x="809.1" y="205.96" width="7.0" height="1.35" fill="#001080" opacity="0.66"/>
<rect x="816.0" y="205.96" width="0.9" height="1.35" fill="#666" opacity="0.35"/>
<rect x="799.5" y="207.69" width="3.5" height="1.35" fill="#0F4A85" opacity="0.66"/>
<rect x="803.0" y="207.69" width="0.9" height="1.35" fill="#666" opacity="0.35"/>
<rect x="803.8" y="207.69" width="17.4" height="1.35" fill="#001080" opacity="0.66"/>
<rect x="821.3" y="207.69" width="0.9" height="1.35" fill="#666" opacity="0.35"/>
<rect x="822.1" y="207.69" width="8.7" height="1.35" fill="#5E2CBC" opacity="0.66"/>
<rect x="830.9" y="207.69" width="0.9" height="1.35" fill="#555" opacity="0.35"/>
<rect x="831.7" y="207.69" width="4.3" height="1.35" fill="#001080" opacity="0.66"/>
<rect x="799.5" y="209.42" width="0.9" height="1.35" fill="#555" opacity="0.35"/>
<rect x="801.2" y="209.42" width="3.5" height="1.35" fill="#B5200D" opacity="0.66"/>
<rect x="805.6" y="209.42" width="0.9" height="1.35" fill="#555" opacity="0.35"/>
<rect x="799.5" y="211.15" width="3.5" height="1.35" fill="#0F4A85" opacity="0.66"/>
<rect x="803.0" y="211.15" width="0.9" height="1.35" fill="#666" opacity="0.35"/>
<rect x="803.8" y="211.15" width="5.2" height="1.35" fill="#5E2CBC" opacity="0.66"/>
<rect x="809.1" y="211.15" width="0.9" height="1.35" fill="#555" opacity="0.35"/>
<rect x="809.9" y="211.15" width="8.7" height="1.35" fill="#001080" opacity="0.66"/>
<rect x="818.7" y="211.15" width="0.9" height="1.35" fill="#555" opacity="0.35"/>
<rect x="819.5" y="211.15" width="0.9" height="1.35" fill="#666" opacity="0.35"/>
<rect x="796.0" y="212.88" width="0.9" height="1.35" fill="#555" opacity="0.35"/>
<rect x="796.9" y="212.88" width="0.9" height="1.35" fill="#666" opacity="0.35"/>
<rect x="792.5" y="214.61" width="0.9" height="1.35" fill="#555" opacity="0.35"/>
<rect x="792.5" y="218.07" width="12.2" height="1.35" fill="#001080" opacity="0.66"/>
<rect x="804.7" y="218.07" width="0.9" height="1.35" fill="#666" opacity="0.35"/>
<rect x="805.6" y="218.07" width="5.2" height="1.35" fill="#5E2CBC" opacity="0.66"/>
<rect x="810.8" y="218.07" width="0.9" height="1.35" fill="#555" opacity="0.35"/>
<rect x="811.7" y="218.07" width="12.2" height="1.35" fill="#0F4A85" opacity="0.66"/>
<rect x="823.9" y="218.07" width="0.9" height="1.35" fill="#666" opacity="0.35"/>
<rect x="825.6" y="218.07" width="5.2" height="1.35" fill="#185E73" opacity="0.66"/>
<rect x="830.9" y="218.07" width="0.9" height="1.35" fill="#555" opacity="0.35"/>
<rect x="831.7" y="218.07" width="0.9" height="1.35" fill="#666" opacity="0.35"/>
<rect x="787" y="159.2" width="2" height="8.7" fill="#388A34"/>
<rect x="787" y="185" width="2" height="2.2" fill="#B5200D"/>
</svg>


<div id="tabs">
<div class="topline"></div>
<div class="vsep" style="left:3px"></div>
<div class="vsep" style="left:160px"></div>
<div class="vsep" style="left:317px"></div>
<div class="vsep" style="left:473px"></div>
<div class="vsep" style="left:630px"></div>
<div class="vsep" style="left:786.5px"></div>
<span class="tsi" style="left:22px">TS</span><span class="tlabel" style="left:46px;letter-spacing:0.55px">tree.ts</span>
<span class="tsi" style="left:179px">TS</span><span class="tlabel" style="left:202.5px;letter-spacing:0.35px">index.ts</span>
<span class="tsi" style="left:336px">TS</span><span class="tlabel" style="left:359.5px;letter-spacing:0.25px">pubsub.ts</span>
<div class="abs" style="left:474px;top:2px;width:156px;height:1px;background:#d4594c"></div>
<div class="abs" style="left:479px;top:7px;width:146.5px;height:34px;box-sizing:border-box;border:1px solid #2b7fc9"></div>
<span class="tsi" style="left:491.7px">TS</span><span class="tlabel" style="left:516px;letter-spacing:0.65px">editor.ts</span>
<div class="abs" style="left:606px;top:19px;width:11px;height:11px;border-radius:50%;background:#1f1f1f"></div>
<span class="tsi" style="left:649px">TS</span><span class="tlabel" style="left:672px;font-style:italic;letter-spacing:0.25px">dialog.ts</span>
<svg class="abs" style="left:798px;top:14px" width="19" height="19" viewBox="0 0 19 19"><rect x="1.5" y="1.5" width="15" height="15.5" rx="1.5" fill="none" stroke="#292929" stroke-width="1.4"/><line x1="9" y1="1.5" x2="9" y2="17" stroke="#292929" stroke-width="1.4"/></svg>
<div class="abs" style="left:832px;top:23px;width:3px;height:3px;border-radius:50%;background:#292929"></div>
<div class="botline"></div>

</div>

<div id="crumbs">
<span class="bc" style="left:4.5px;letter-spacing:-0.25px">packages</span>
<svg class="chev" style="left:81px;top:7px" width="10" height="15" viewBox="0 0 10 15"><polyline points="1.8,1.6 7.6,7.5 1.8,13.4" fill="none" stroke="#4a4a4a" stroke-width="1.2"/></svg>
<span class="bc" style="left:95px;letter-spacing:0.15px">chili-ui</span>
<svg class="chev" style="left:150.5px;top:7px" width="10" height="15" viewBox="0 0 10 15"><polyline points="1.8,1.6 7.6,7.5 1.8,13.4" fill="none" stroke="#4a4a4a" stroke-width="1.2"/></svg>
<span class="bc" style="left:164.5px;letter-spacing:-0.15px">src</span>
<svg class="chev" style="left:192.5px;top:7px" width="10" height="15" viewBox="0 0 10 15"><polyline points="1.8,1.6 7.6,7.5 1.8,13.4" fill="none" stroke="#4a4a4a" stroke-width="1.2"/></svg>
<span class="tsi" style="left:212px;top:8px">TS</span>
<span class="bc" style="left:236.5px;letter-spacing:0.65px">editor.ts</span>
<svg class="chev" style="left:305px;top:7px" width="10" height="15" viewBox="0 0 10 15"><polyline points="1.8,1.6 7.6,7.5 1.8,13.4" fill="none" stroke="#4a4a4a" stroke-width="1.2"/></svg>
<svg class="abs" style="left:321.5px;top:4.5px" width="18.5" height="18.5" viewBox="0 0 16 16"><path fill="#D67E00" stroke="#D67E00" stroke-width="0.3" d="M11.34 9.71h.71l2.67-2.67v-.71L13.38 5h-.7l-1.82 1.81h-5V5.56l1.86-1.85V3l-2-2H5L1 5v.71l2 2h.71l1.14-1.15v5.79l.5.5H10v.52l1.33 1.34h.71l2.67-2.67v-.71L13.37 10h-.7l-1.86 1.85h-5v-4H10v.48l1.34 1.38zm1.69-3.65l.63.63-2 2-.63-.63 2-2zm0 5l.63.63-2 2-.63-.63 2-2zM3.35 6.65l-1.29-1.3 3.29-3.29 1.3 1.29-3.3 3.3z"/></svg>
<span class="bc" style="left:346.5px;color:#4a4a4a">Editor</span>
<svg class="chev" style="left:397px;top:7px" width="10" height="15" viewBox="0 0 10 15"><polyline points="1.8,1.6 7.6,7.5 1.8,13.4" fill="none" stroke="#4a4a4a" stroke-width="1.2"/></svg>
<div class="botline"></div>

</div>

<div id="dbg">
<div id="dbgsel"><span>Debug Rspack</span></div>

</div>
<svg id="dbgsvg" style="position:absolute;left:405px;top:44px" width="431" height="42" viewBox="405 44 431 42">
<g fill="#858585">
<rect x="425.2" y="58.9" width="2.5" height="2.5"/><rect x="430.8" y="58.9" width="2.5" height="2.5"/>
<rect x="425.2" y="64" width="2.5" height="2.5"/><rect x="430.8" y="64" width="2.5" height="2.5"/>
<rect x="425.2" y="69.1" width="2.5" height="2.5"/><rect x="430.8" y="69.1" width="2.5" height="2.5"/>
</g>
<g fill="#1f7bd6"><rect x="449.3" y="58.2" width="2.3" height="13.4"/><rect x="456.8" y="58.2" width="2.3" height="13.4"/></g>
<!-- step over -->
<g fill="none" stroke="#808080" stroke-width="2" stroke-linecap="butt">
<path d="M480.4 64.9 A7.7 7.7 0 0 1 494.6 62.2"/>
<polyline points="495.3,57.1 495.3,62.8 489.9,62.8"/>
</g>
<circle cx="487.9" cy="70.5" r="2.6" fill="#808080"/>
<!-- step into -->
<g fill="none" stroke="#808080" stroke-width="2">
<line x1="521.8" y1="56.3" x2="521.8" y2="66.3"/>
<polyline points="516.9,61.4 521.8,66.4 526.7,61.4"/>
</g>
<circle cx="521.8" cy="71.7" r="2.7" fill="#808080"/>
<!-- step out -->
<g fill="none" stroke="#808080" stroke-width="2">
<line x1="555.7" y1="56.8" x2="555.7" y2="67"/>
<polyline points="550.7,61.6 555.7,56.6 560.7,61.6"/>
</g>
<circle cx="555.7" cy="71.7" r="2.7" fill="#808080"/>
<!-- restart -->
<g fill="none" stroke="#388A34" stroke-width="2">
<path d="M585.3 61 A6.7 6.7 0 1 1 583.7 66.8"/>
<polyline points="582.9,57.9 582.9,62.6 587.6,62.6"/>
</g>
<!-- stop -->
<rect x="616.9" y="58.1" width="14.2" height="13.8" rx="1.8" fill="none" stroke="#B5200D" stroke-width="1.6"/>
<!-- chevron -->
<polyline points="639.9,63.2 644.6,67.8 649.3,63.2" fill="none" stroke="#555" stroke-width="1.3"/>
<!-- select chevron -->
<polyline points="784.3,61.2 792,68.6 799.7,61.2" fill="none" stroke="#333" stroke-width="1.3"/>
<!-- separator -->
<line x1="825.3" y1="55" x2="825.3" y2="75.5" stroke="#cfcfcf" stroke-width="1"/>

</svg>

<div id="bottom"></div>
<div id="wm">CSDN @njsgcs</div>
</body>
</html>
